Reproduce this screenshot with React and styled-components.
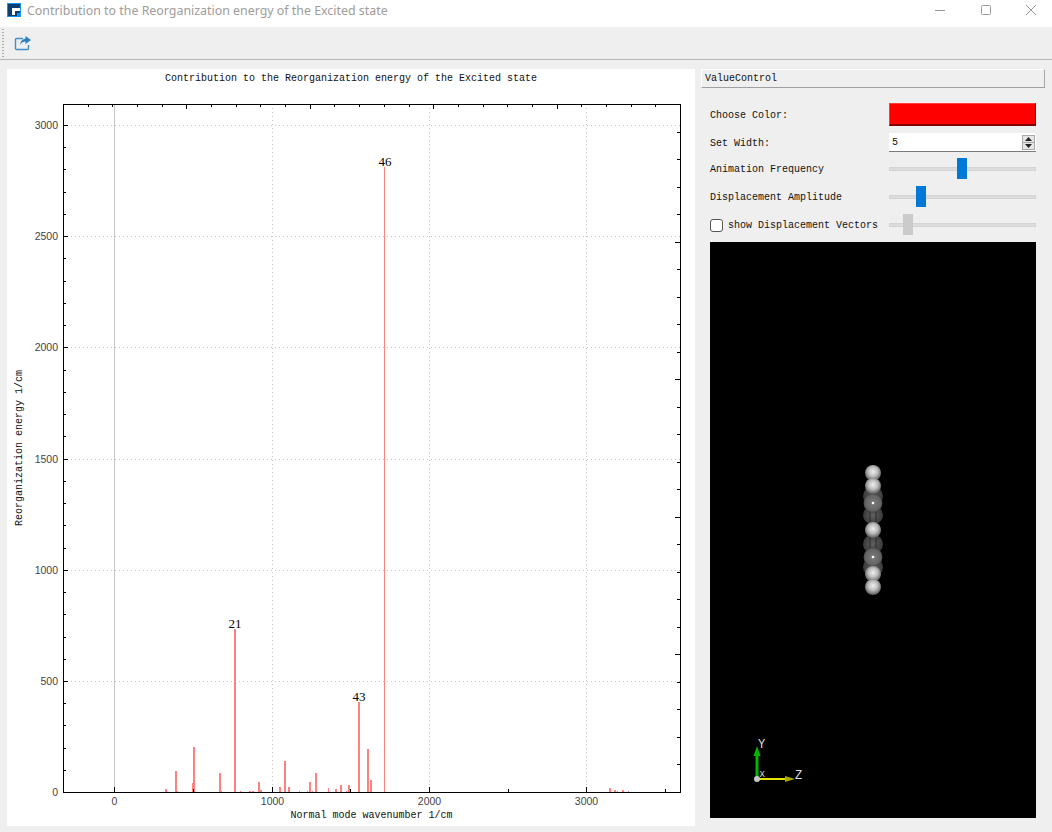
import React from "react"
import styled, { createGlobalStyle } from "styled-components"

const MONO = `"Liberation Mono", "DejaVu Sans Mono", monospace`
const SERIF = `"Liberation Serif", "DejaVu Serif", serif`
const SANS = `"Liberation Sans", Arial, sans-serif`

const GlobalStyle = createGlobalStyle`
  html, body {
    margin: 0;
    padding: 0;
    background: #efefef;
  }
`

const Window = styled.div`
  width: 1052px;
  height: 832px;
  display: flex;
  flex-direction: column;
  background: #efefef;
  overflow: hidden;
`

const TitleBar = styled.div`
  height: 27px;
  box-sizing: border-box;
  display: flex;
  align-items: center;
  background: #fff;
  padding: 0 0 7px 7px;
  gap: 6px;
`

const Title = styled.div`
  flex: 1;
  font: 12.4px "Noto Sans", "Open Sans", sans-serif;
  color: #a09c9a;
`

const WinButtons = styled.div`
  display: flex;
  align-items: center;
  gap: 33.5px;
  padding-right: 15px;
`

const ToolBar = styled.div`
  height: 32px;
  display: flex;
  align-items: center;
  gap: 10px;
  padding-left: 2px;
  border-bottom: 1px solid #b5b5b5;
`

const Grip = styled.div`
  width: 2px;
  height: 28px;
  background-image: linear-gradient(#a8a8a8 50%, transparent 50%);
  background-size: 2px 3px;
`

const Content = styled.div`
  flex: 1;
  display: flex;
  padding: 9px 16px 6px 7px;
  gap: 6px;
`

const PlotPanel = styled.div`
  width: 688px;
  height: 757px;
  background: #fff;
  flex-shrink: 0;
`

const Side = styled.div`
  flex: 1;
  display: flex;
  flex-direction: column;
`

const DockTitle = styled.div`
  height: 19px;
  margin-right: -9px;
  box-sizing: border-box;
  border-top: 1px solid #fff;
  border-left: 1px solid #fff;
  border-right: 1px solid #a8a8a8;
  border-bottom: 1px solid #a0a0a0;
  font: 10px/17px ${MONO};
  padding-left: 3px;
  color: #111;
`

const Controls = styled.div`
  display: flex;
  flex-direction: column;
  margin: 12px 0 0 9px;
`

const Row = styled.div`
  height: ${(p) => p.$h}px;
  display: flex;
  align-items: center;
  justify-content: space-between;
`

const Label = styled.label`
  display: flex;
  align-items: center;
  gap: 5px;
  margin-top: 2px;
  font: 10px ${MONO};
  color: #111;
  white-space: nowrap;
`

const CheckBox = styled.span`
  width: 11px;
  height: 11px;
  border: 1px solid #555;
  border-radius: 3px;
  background: #fff;
`

const ColorButton = styled.div`
  width: 147px;
  height: 23px;
  box-sizing: border-box;
  background: #ff0000;
  border-top: 1px solid #ff3c3c;
  border-left: 1px solid #ff3c3c;
  border-right: 1px solid #6a0000;
  border-bottom: 2px solid #800000;
`

const SpinBox = styled.div`
  width: 147px;
  height: 19px;
  box-sizing: border-box;
  display: flex;
  align-items: center;
  justify-content: space-between;
  background: #fff;
  border-bottom: 1px solid #7a7a7a;
  font: 10px ${MONO};
  padding: 0 1px 0 3px;
  color: #111;
`

const SpinArrows = styled.div`
  width: 13px;
  height: 15px;
  display: flex;
  flex-direction: column;
  box-sizing: border-box;
  border: 1px solid #a8a8a8;
  background: #e6e6e6;
`

const SpinArrow = styled.div`
  flex: 1;
  display: flex;
  align-items: center;
  justify-content: center;
  & + & {
    border-top: 1px solid #a8a8a8;
  }
`

const Slider = styled.div`
  width: 147px;
  height: 21px;
  position: relative;
  display: flex;
  align-items: center;
`

const Groove = styled.div`
  width: 100%;
  height: 4px;
  background: #dcdcdc;
  border: 1px solid #d4d4d4;
  box-sizing: border-box;
`

const Handle = styled.div`
  position: absolute;
  top: 0;
  width: 10px;
  height: 21px;
  background: ${(p) => (p.$off ? "#cbcbcb" : "#0078d7")};
`

const ViewPort = styled.div`
  margin: 5px 0 0 9px;
  width: 326px;
  height: 576px;
  background: #000;
`

// plot geometry, all in panel coordinates (panel sits at 7,69)
const ox = (x) => Math.round(107.3 + x * 0.15733)
const oy = (v) => Math.round(723.2 - v * 0.2224)
const AXL = 56
const AXR = 673
const AXT = 35
const AXB = 723

// left pixel in the window, width, height above the axis
const BARS = [
  [165, 2, 3], [175, 2, 21], [177, 1, 1], [192, 1, 9], [193, 2, 45], [219, 2, 19], [221, 1, 1],
  [234, 2, 163], [240, 1, 1], [249, 2, 1], [252, 2, 1], [258, 2, 10], [260, 2, 2],
  [279, 2, 5], [284, 2, 31], [288, 2, 5], [299, 1, 1], [307, 1, 1], [309, 2, 10], [312, 1, 1],
  [315, 2, 19], [328, 1, 4], [335, 2, 3], [340, 2, 7], [346, 1, 1], [348, 2, 7],
  [358, 2, 90], [367, 2, 43], [370, 2, 12], [384, 1, 625],
  [609, 2, 4], [614, 2, 2], [617, 1, 1], [622, 2, 2], [628, 1, 1],
]

const PEAKS = [
  { text: "21", x: 228, y: 558.5 },
  { text: "43", x: 352, y: 631.5 },
  { text: "46", x: 378, y: 96.5 },
]

const xMajor = [0, 1000, 2000, 3000]
const xMinor = [500, 1500, 2500, 3500]
const yMajor = [0, 500, 1000, 1500, 2000, 2500, 3000]
const yMinor = Array.from({ length: 31 }, (_, i) => i * 100).filter((v) => v % 500 !== 0)

// top and right axes carry their own even divisions
const topTicks = Array.from({ length: 24 }, (_, i) => i + 1)
const rightTicks = Array.from({ length: 24 }, (_, i) => i + 1)

const DOT = "1 3"

const Tick = ({ x1, y1, x2, y2 }) => <line x1={x1} y1={y1} x2={x2} y2={y2} stroke="#000" />

const Plot = () => (
  <svg width="688" height="757" style={{ display: "block" }}>
    <text x="344" y="12" fontFamily={MONO} fontSize="10" textAnchor="middle" fill="#111">
      Contribution to the Reorganization energy of the Excited state
    </text>

    {xMajor.slice(1).map((x) => (
      <line key={x} x1={ox(x) + 0.5} x2={ox(x) + 0.5} y1={AXT} y2={AXB} stroke="#c4c4c4" strokeDasharray={DOT} />
    ))}
    {yMajor.slice(1).map((v) => (
      <line key={v} x1={AXL} x2={AXR} y1={oy(v) + 0.5} y2={oy(v) + 0.5} stroke="#c4c4c4" strokeDasharray={DOT} />
    ))}

    <rect x={107} y={AXT} width={1} height={AXB - AXT} fill="#c4c4c4" />
    {BARS.map(([x, w, h]) => (
      <rect key={x} x={x - 7} y={AXB - h} width={w} height={h} fill="#ff8080" />
    ))}

    <rect x={AXL + 0.5} y={AXT + 0.5} width={AXR - AXL} height={AXB - AXT} fill="none" stroke="#000" />

    {xMajor.map((x) => (
      <g key={x}>
        <Tick x1={ox(x) + 0.5} x2={ox(x) + 0.5} y1={AXB} y2={AXB - 5} />
        <text x={ox(x) + 0.5} y={AXB + 13} fontFamily={SANS} fontSize="10.5" textAnchor="middle" fill="#444">{x}</text>
      </g>
    ))}
    {xMinor.map((x) => (
      <Tick key={x} x1={ox(x) + 0.5} x2={ox(x) + 0.5} y1={AXB} y2={AXB - 3} />
    ))}
    {topTicks.map((i) => {
      const x = Math.round(AXL + (i * (AXR - AXL)) / 25) + 0.5
      return <Tick key={i} x1={x} x2={x} y1={AXT} y2={AXT + (i % 5 === 0 ? 5 : 3)} />
    })}
    {yMajor.map((v) => (
      <g key={v}>
        <Tick x1={AXL} x2={AXL + 5} y1={oy(v) + 0.5} y2={oy(v) + 0.5} />
        <text x={AXL - 5} y={oy(v) + 4} fontFamily={SANS} fontSize="10.5" textAnchor="end" fill="#444">{v}</text>
      </g>
    ))}
    {yMinor.map((v) => (
      <Tick key={v} x1={AXL} x2={AXL + 3} y1={oy(v) + 0.5} y2={oy(v) + 0.5} />
    ))}
    {rightTicks.map((i) => {
      const y = Math.round(AXT + (i * (AXB - AXT)) / 25) + 0.5
      return <Tick key={i} x1={AXR} x2={AXR - (i % 5 === 0 ? 5 : 3)} y1={y} y2={y} />
    })}

    {PEAKS.map((p) => (
      <text key={p.text} x={p.x} y={p.y} fontFamily={SERIF} fontSize="13" textAnchor="middle" fill="#000">{p.text}</text>
    ))}

    <text x="364.5" y="749" fontFamily={MONO} fontSize="10" textAnchor="middle" fill="#111">Normal mode wavenumber 1/cm</text>
    <text transform="translate(15 379) rotate(-90)" fontFamily={MONO} fontSize="10" textAnchor="middle" fill="#111">Reorganization energy 1/cm</text>
  </svg>
)

const SIDE_ATOMS = [254, 273, 302, 325]
const CARBONS = [261, 315]
const HYDROGENS = [231, 244, 288, 332, 345]

const Molecule = () => (
  <svg width="326" height="576" style={{ display: "block" }}>
    <defs>
      <radialGradient id="hAtom" cx="50%" cy="42%" r="58%">
        <stop offset="0" stopColor="#efefef" />
        <stop offset="0.5" stopColor="#bdbdbd" />
        <stop offset="1" stopColor="#585858" />
      </radialGradient>
      <radialGradient id="cAtom" cx="50%" cy="50%" r="55%">
        <stop offset="0" stopColor="#7c7c7c" />
        <stop offset="0.75" stopColor="#626262" />
        <stop offset="1" stopColor="#2e2e2e" />
      </radialGradient>
      <radialGradient id="cSide" cx="50%" cy="50%" r="55%">
        <stop offset="0" stopColor="#606060" />
        <stop offset="1" stopColor="#363636" />
      </radialGradient>
    </defs>
    <g>
      {SIDE_ATOMS.map((y) => (
        <ellipse key={y} cx="163" cy={y} rx="10" ry="9.5" fill="url(#cSide)" />
      ))}
      <path d="M160 268V280M166 268V280M160 295V308M166 295V308" stroke="#2a2a2a" />
      {CARBONS.map((y) => (
        <g key={y}>
          <circle cx="163" cy={y} r="9.5" fill="url(#cAtom)" />
          <circle cx="163" cy={y} r="1.3" fill="#fff" />
        </g>
      ))}
      {HYDROGENS.map((y) => (
        <circle key={y} cx="163" cy={y} r="8" fill="url(#hAtom)" />
      ))}
    </g>
    <g transform="translate(47 537)">
      <rect x="-1.5" y="-24" width="3" height="24" fill="#00b800" />
      <polygon points="0,-33 -3.5,-23 3.5,-23" fill="#00b800" />
      <rect x="0" y="-1" width="29" height="2" fill="#e4e400" />
      <polygon points="38,0 28,-3 28,3" fill="#a8a800" />
      <circle cx="0" cy="0" r="3" fill="#c8c8c8" />
      <text x="1" y="-31" fontFamily={MONO} fontSize="12" fill="#ddd">Y</text>
      <text x="2.5" y="-2" fontFamily={MONO} fontSize="9" fill="#ddd">X</text>
      <text x="38" y="0" fontFamily={MONO} fontSize="12" fill="#ddd">Z</text>
    </g>
  </svg>
)

const AppIcon = () => (
  <svg width="14" height="14" viewBox="0 0 14 14">
    <rect width="14" height="14" fill="#1492ea" />
    <rect x="1" y="1" width="12" height="12" fill="#0b3f73" />
    <path d="M5 5H13V8H8V12H5Z" fill="#fff" />
    <rect x="10" y="10" width="3" height="3" fill="#1492ea" />
  </svg>
)

const ShareIcon = () => (
  <svg width="18" height="16" viewBox="0 0 18 16" fill="none">
    <path d="M9 3.5H2.5a1 1 0 0 0-1 1v9a1 1 0 0 0 1 1h11a1 1 0 0 0 1-1V10" stroke="#3f8fcb" strokeWidth="1.4" />
    <path d="M11.5 1l5.5 4-5.5 4V6.6C9 6.6 7.5 7.6 6 10c.3-3.6 2.4-6 5.5-6.4z" fill="#2e7fc0" />
  </svg>
)

const App = () => (
  <Window>
    <GlobalStyle />
    <TitleBar>
      <AppIcon />
      <Title>Contribution to the Reorganization energy of the Excited state</Title>
      <WinButtons>
        <svg width="12" height="12"><line x1="1" x2="11" y1="6.5" y2="6.5" stroke="#999" /></svg>
        <svg width="12" height="12"><rect x="1.5" y="1.5" width="9" height="9" rx="1" fill="none" stroke="#999" /></svg>
        <svg width="12" height="12"><path d="M1 1L11 11M11 1L1 11" stroke="#999" /></svg>
      </WinButtons>
    </TitleBar>
    <ToolBar>
      <Grip />
      <ShareIcon />
    </ToolBar>
    <Content>
      <PlotPanel>
        <Plot />
      </PlotPanel>
      <Side>
        <DockTitle>ValueControl</DockTitle>
        <Controls>
          <Row $h={29}>
            <Label>Choose Color:</Label>
            <ColorButton />
          </Row>
          <Row $h={27}>
            <Label>Set Width:</Label>
            <SpinBox>
              5
              <SpinArrows>
                <SpinArrow>
                  <svg width="7" height="4"><path d="M3.5 0L7 4H0Z" fill="#222" /></svg>
                </SpinArrow>
                <SpinArrow>
                  <svg width="7" height="4"><path d="M0 0H7L3.5 4Z" fill="#222" /></svg>
                </SpinArrow>
              </SpinArrows>
            </SpinBox>
          </Row>
          <Row $h={25}>
            <Label>Animation Frequency</Label>
            <Slider>
              <Groove />
              <Handle style={{ left: 68 }} />
            </Slider>
          </Row>
          <Row $h={31}>
            <Label>Displacement Amplitude</Label>
            <Slider>
              <Groove />
              <Handle style={{ left: 27 }} />
            </Slider>
          </Row>
          <Row $h={25}>
            <Label>
              <CheckBox />
              show Displacement Vectors
            </Label>
            <Slider>
              <Groove />
              <Handle $off style={{ left: 14 }} />
            </Slider>
          </Row>
        </Controls>
        <ViewPort>
          <Molecule />
        </ViewPort>
      </Side>
    </Content>
  </Window>
)

export default App
